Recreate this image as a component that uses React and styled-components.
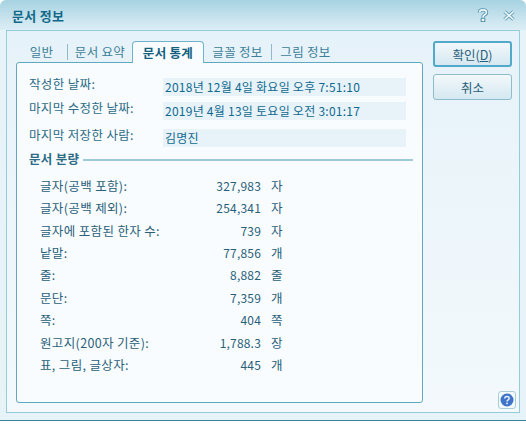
import React from 'react'
import styled, { createGlobalStyle } from 'styled-components'

const GlobalStyle = createGlobalStyle`
  html, body { margin: 0; padding: 0; background: #fff; }
  body { font-family: "Noto Sans CJK KR", "Liberation Sans", sans-serif; }
  * { box-sizing: border-box; }
`

const Window = styled.div`
  width: 526px;
  height: 421px;
  display: flex;
  flex-direction: column;
  background: #e6f3f9;
  border-bottom: 1px solid #3b8299;
  border-radius: 6px 6px 0 0;
  overflow: hidden;
  color: #1c6480;
  font-size: 12px;
`

const TitleBar = styled.div`
  height: 30px;
  flex: none;
  display: flex;
  align-items: center;
  padding: 0 11px 0 12px;
  background: linear-gradient(#a6d2e1, #d3e9f2 80%, #dcedf5);
`

const Title = styled.div`
  flex: 1;
  font-size: 13px;
  font-weight: 700;
  color: #14698a;
  letter-spacing: 0.3px;
`

const TitleIcon = styled.svg`
  display: block;
  margin-left: ${p => p.$gap}px;
`

const Frame = styled.div`
  flex: 1;
  margin: 0 6px 7px;
  display: flex;
  gap: 10px;
  padding: 10px 7px 9px 9px;
  border: 1px solid #96cbd9;
  background: linear-gradient(#e6f2f9, #f3f9fc);
`

const MainColumn = styled.div`
  width: 407px;
  flex: none;
  display: flex;
  flex-direction: column;
`

const Tabs = styled.div`
  height: 21px;
  display: flex;
  align-items: flex-start;
  position: relative;
  z-index: 1;
`

const Tab = styled.div`
  width: ${p => p.$w}px;
  height: ${p => (p.$active ? 22 : 20)}px;
  display: flex;
  align-items: center;
  justify-content: center;
  white-space: nowrap;
  color: #3d8199;
  font-size: 12.5px;
  letter-spacing: 0.3px;
  ${p => p.$active && `
    color: #135f7e;
    font-weight: 700;
    background: #f8fcfe;
    border: 1px solid #6fb3c8;
    border-bottom: none;
    border-radius: 4px 4px 0 0;
  `}
`

const TabDivider = styled.div`
  width: 1px;
  height: 16px;
  margin-top: 3px;
  background: #8fb9c6;
`

const Panel = styled.div`
  flex: 1;
  padding: 15px 16px 0 12px;
  background: #f8fcfe;
  border: 1px solid #5ea9bf;
  border-radius: 3px;
`

const InfoRow = styled.div`
  height: 18px;
  display: grid;
  grid-template-columns: 134px 1fr;
  margin-bottom: ${p => p.$mb}px;
`

const InfoLabel = styled.div`
  font-size: 12.5px;
  line-height: 12px;
  color: #2c6b86;
  letter-spacing: 0.35px;
`

const InfoValue = styled.div`
  height: 18px;
  line-height: 17px;
  padding-left: 2px;
  background: #e8f2f9;
  color: #0f6a8f;
  font-size: 12px;
  letter-spacing: 0.25px;
  white-space: nowrap;
`

const GroupHead = styled.div`
  display: flex;
  align-items: center;
  gap: 4px;
  margin: 3px -7px 6px 0;
  font-size: 12.5px;
  font-weight: 700;
  color: #2c6b86;
  letter-spacing: 0.3px;
  line-height: 18px;
`

const GroupLine = styled.div`
  flex: 1;
  height: 2px;
  margin-top: 2px;
  background: #9ccbdb;
`

const StatRow = styled.div`
  height: 22.45px;
  padding-left: 11px;
  display: grid;
  grid-template-columns: 155px 66px 10px 1fr;
  align-items: center;
  color: #2a5f7a;
  white-space: nowrap;
`

const StatLabel = styled.div`
  font-size: 12.5px;
  letter-spacing: 0.35px;
`

const StatNumber = styled.div`
  grid-column: 2;
  text-align: right;
  font-size: 12px;
  letter-spacing: 0.2px;
`

const StatUnit = styled.div`
  grid-column: 4;
  font-size: 12.5px;
`

const SideColumn = styled.div`
  width: 79px;
  flex: none;
  display: flex;
  flex-direction: column;
  gap: 7px;
`

const DialogButton = styled.button`
  width: 79px;
  height: 26px;
  padding: 0;
  font-family: inherit;
  font-size: 12.5px;
  color: #2a5f7a;
  background: linear-gradient(#f2f8fb, #d5e8f1);
  border: ${p => (p.$primary ? '2px solid #52aacb' : '1px solid #8dbccb')};
  border-radius: 3px;
`

const HelpBox = styled.div`
  width: 18px;
  height: 18px;
  flex: none;
  margin-top: auto;
  margin-left: 65px;
  margin-bottom: -6px;
  display: flex;
  align-items: center;
  justify-content: center;
  background: #f4f9fb;
  border: 1px solid #a9cdd9;
  border-radius: 3px;
`

const infoRows = [
  { label: '작성한 날짜:', value: '2018년 12월 4일 화요일 오후 7:51:10', mb: 6 },
  { label: '마지막 수정한 날짜:', value: '2019년 4월 13일 토요일 오전 3:01:17', mb: 9 },
  { label: '마지막 저장한 사람:', value: '김명진', mb: 0 },
]

const stats = [
  ['글자(공백 포함):', '327,983', '자'],
  ['글자(공백 제외):', '254,341', '자'],
  ['글자에 포함된 한자 수:', '739', '자'],
  ['낱말:', '77,856', '개'],
  ['줄:', '8,882', '줄'],
  ['문단:', '7,359', '개'],
  ['쪽:', '404', '쪽'],
  ['원고지(200자 기준):', '1,788.3', '장'],
  ['표, 그림, 글상자:', '445', '개'],
]

export default function App() {
  return (
    <>
      <GlobalStyle />
      <Window>
        <TitleBar>
          <Title>문서 정보</Title>
          <TitleIcon width="12" height="14" viewBox="0 0 12 14" $gap={0}>
            <path d="M2.5 4.5 C2.5 1 9.5 1 9.5 4.5 C9.5 7 6 6.5 6 9" fill="none" stroke="#4f8fa8" strokeWidth="3.4" />
            <path d="M2.5 4.5 C2.5 1 9.5 1 9.5 4.5 C9.5 7 6 6.5 6 9" fill="none" stroke="#f4fafc" strokeWidth="1.6" />
            <rect x="4.2" y="10.2" width="3.6" height="3.4" fill="#f4fafc" stroke="#4f8fa8" />
          </TitleIcon>
          <TitleIcon width="12" height="11" viewBox="0 0 12 11" $gap={14}>
            <path d="M1.5 1.5 L10.5 9.5 M10.5 1.5 L1.5 9.5" stroke="#6ea6bb" strokeWidth="3.4" />
            <path d="M1.5 1.5 L10.5 9.5 M10.5 1.5 L1.5 9.5" stroke="#f4fafc" strokeWidth="1.5" />
          </TitleIcon>
        </TitleBar>
        <Frame>
          <MainColumn>
            <Tabs>
              <Tab $w={51}>일반</Tab>
              <TabDivider />
              <Tab $w={64}>문서 요약</Tab>
              <Tab $w={72} $active>문서 통계</Tab>
              <Tab $w={67}>글꼴 정보</Tab>
              <TabDivider />
              <Tab $w={67}>그림 정보</Tab>
            </Tabs>
            <Panel>
              {infoRows.map(row => (
                <InfoRow key={row.label} $mb={row.mb}>
                  <InfoLabel>{row.label}</InfoLabel>
                  <InfoValue>{row.value}</InfoValue>
                </InfoRow>
              ))}
              <GroupHead>
                문서 분량
                <GroupLine />
              </GroupHead>
              {stats.map(([label, num, unit]) => (
                <StatRow key={label}>
                  <StatLabel>{label}</StatLabel>
                  <StatNumber>{num}</StatNumber>
                  <StatUnit>{unit}</StatUnit>
                </StatRow>
              ))}
            </Panel>
          </MainColumn>
          <SideColumn>
            <DialogButton $primary>확인(<u>D</u>)</DialogButton>
            <DialogButton>취소</DialogButton>
            <HelpBox>
              <svg width="14" height="14" viewBox="0 0 14 14">
                <circle cx="7" cy="7" r="6.5" fill="#3f74c8" />
                <path d="M4.8 5.4 C4.8 2.9 9.2 2.9 9.2 5.4 C9.2 7 7 6.8 7 8.6" fill="none" stroke="#e8f0fa" strokeWidth="1.5" />
                <rect x="6.2" y="9.6" width="1.6" height="1.6" fill="#e8f0fa" />
              </svg>
            </HelpBox>
          </SideColumn>
        </Frame>
      </Window>
    </>
  )
}
